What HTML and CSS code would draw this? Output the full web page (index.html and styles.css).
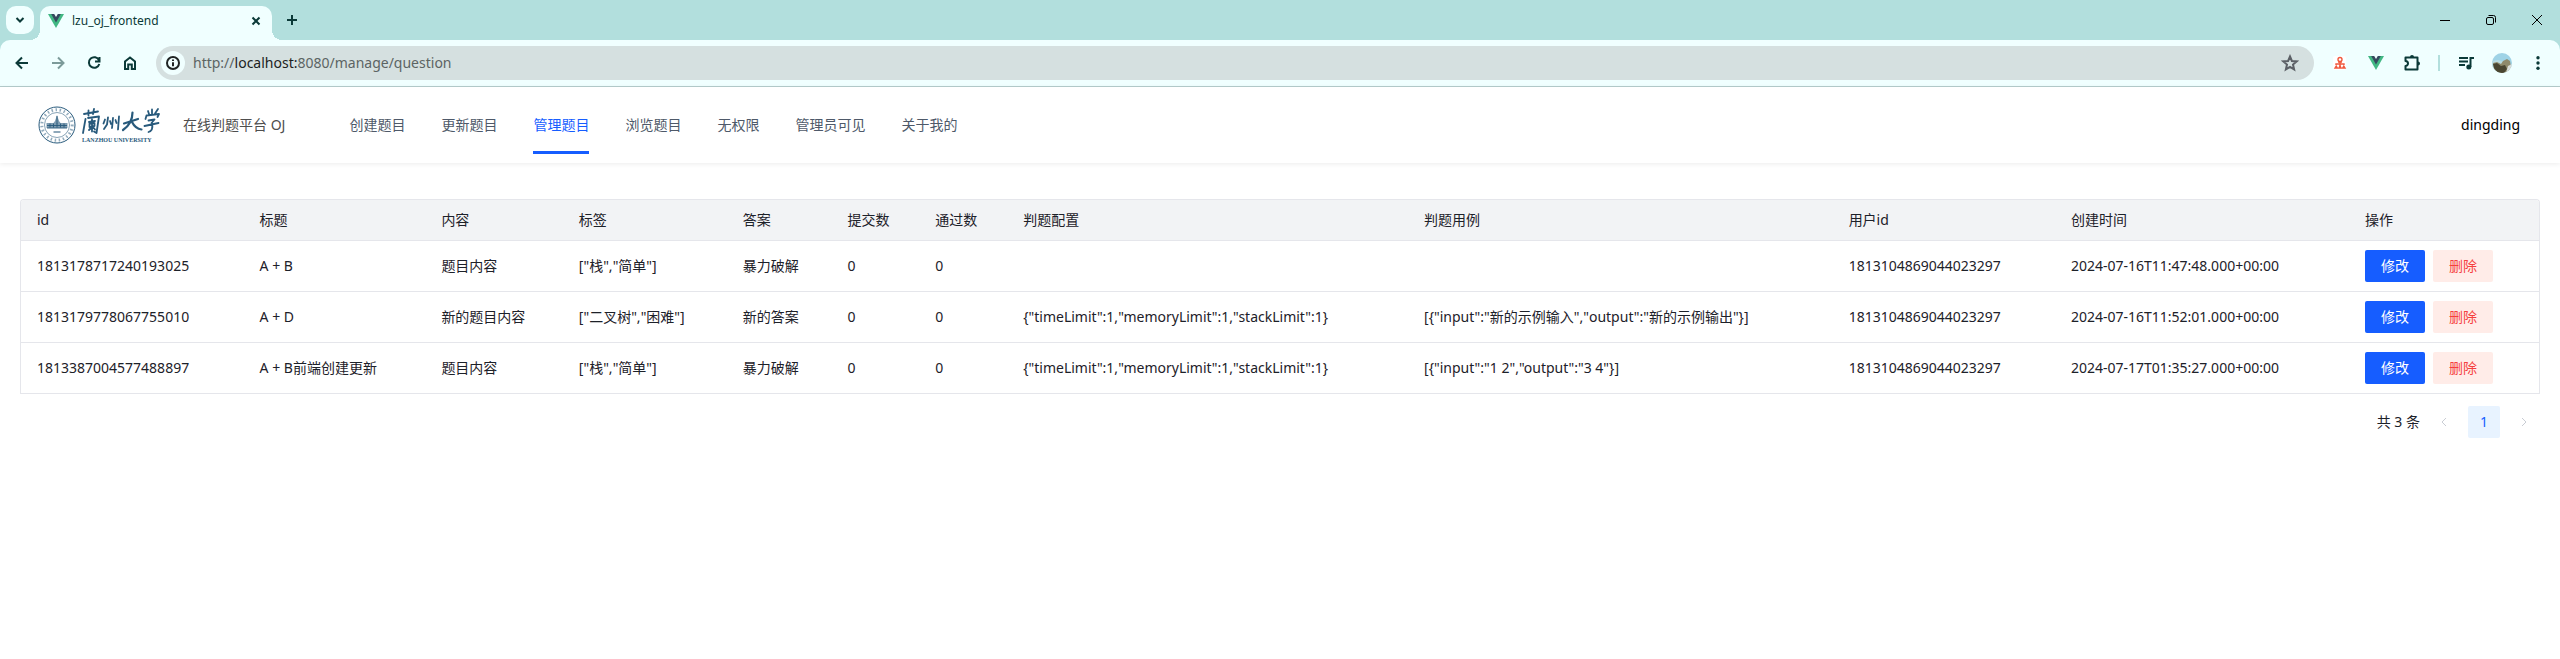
FILE: index.html
```html
<!DOCTYPE html>
<html lang="zh-CN">
<head>
<meta charset="utf-8">
<title>lzu_oj_frontend</title>
<link rel="stylesheet" href="styles.css">
</head>
<body>
<div class="browser">
  <div class="tabstrip">
    <button class="tab-search" aria-label="Search tabs"><svg width="28" height="28" viewBox="0 0 28 28"><path d="M10.500 12L14 15.500L17.500 12" class="ln2"/></svg></button>
    <div class="tab">
      <svg class="vue" width="16" height="16" viewBox="0 0 16 16"><path d="M0 1h16L8 15z" fill="#41b883"/><path d="M3.200 1h9.600L8 9.500z" fill="#35495e"/><path d="M6.200 1h3.600L8 4z" fill="#f0ffff"/></svg>
      <span class="tab-title">lzu_oj_frontend</span>
      <button class="tab-close" aria-label="Close tab"><svg width="16" height="16" viewBox="0 0 16 16"><path d="M4.500 4.500l7 7M11.500 4.500l-7 7" class="ln2"/></svg></button>
    </div>
    <button class="new-tab" aria-label="New tab"><svg width="16" height="16" viewBox="0 0 16 16"><path d="M8 3v10M3 8h10" class="ln2"/></svg></button>
    <div class="window-controls">
      <button aria-label="Minimize"><svg width="12" height="12" viewBox="0 0 12 12"><path d="M1 6.500h10" class="ln1"/></svg></button>
      <button aria-label="Restore"><svg width="12" height="12" viewBox="0 0 12 12"><rect x="1.500" y="3.500" width="7" height="7" rx="1.500" class="ln1"/><path d="M3.500 1.500H8.500a2 2 0 0 1 2 2V8.500" class="ln1"/></svg></button>
      <button aria-label="Close"><svg width="12" height="12" viewBox="0 0 12 12"><path d="M1 1l10 10M11 1L1 11" class="ln1"/></svg></button>
    </div>
  </div>
  <div class="toolbar">
    <div class="nav-buttons">
      <button aria-label="Back"><svg width="16" height="16" viewBox="0 0 16 16"><path d="M14 8H3M8 2.500L2.500 8L8 13.500" class="ln2"/></svg></button>
      <button class="off" aria-label="Forward"><svg width="16" height="16" viewBox="0 0 16 16"><path d="M2 8h11M8 2.500L13.500 8L8 13.500" class="ln2"/></svg></button>
      <button aria-label="Reload"><svg width="16" height="16" viewBox="0 0 16 16"><path d="M13 5.200A5.300 5.300 0 1 0 13.300 9M13.500 2v4.500H9" class="ln2"/></svg></button>
      <button aria-label="Home"><svg width="16" height="16" viewBox="0 0 16 16"><path d="M3 14V6.500L8 2.500L13 6.500V14H9.800V9.500H6.200V14z" class="ln2"/></svg></button>
    </div>
    <div class="omnibox">
      <button class="info" aria-label="Site information"><svg width="16" height="16" viewBox="0 0 16 16"><circle cx="8" cy="8" r="6" class="ln2"/><path d="M8 7.300V11.300M8 4.500v1.600" class="ln2"/></svg></button>
      <div class="url">http://<b>localhost:</b>8080/manage/question</div>
      <button class="star" aria-label="Bookmark"><svg width="18" height="18" viewBox="0 0 18 18"><path d="M9 2.500l1.900 4.500 4.800.4-3.700 3.200 1.100 4.700L9 12.800l-4.100 2.500L6 10.600 2.300 7.400 7.100 7z" class="ln2"/></svg></button>
    </div>
    <div class="extensions">
      <button aria-label="Extension"><svg width="16" height="16" viewBox="0 0 16 16"><rect x="1" y="1" width="13" height="14" rx="2" fill="#fff"/><g fill="none" stroke="#f0593e" stroke-width="1.400"><circle cx="8" cy="4.500" r="2"/><path d="M8 6v7M4 10V9h8v1M6 7h4"/><path d="M3 13l1.200-2 1.200 2zM10.600 13l1.200-2 1.200 2zM6.800 13L8 11l1.200 2z"/></g></svg></button>
      <button aria-label="Vue devtools"><svg width="16" height="16" viewBox="0 0 16 16"><path d="M0 1h16L8 15z" fill="#41b883"/><path d="M3.200 1h9.600L8 9.500z" fill="#35495e"/><path d="M6.200 1h3.600L8 4z" fill="#f0ffff"/></svg></button>
      <button aria-label="Extensions"><svg width="20" height="20" viewBox="0 0 20 20"><path d="M3.500 4.500H15.500V16.500H3.500V13a2.500 2.500 0 0 0 0-5z" class="ln2" stroke-linejoin="round"/><path d="M8 4a2 2 0 0 1 4 0zM16 8.500a2 2 0 0 1 0 4z" fill="#0b3a38"/></svg></button>
      <span class="divider"></span>
      <button aria-label="Media"><svg width="18" height="18" viewBox="0 0 18 18"><path d="M2 4h9M2 7.500h9M2 11h6M13.500 13V4H17" class="ln2"/><circle cx="11.800" cy="13" r="2.500" fill="#0b3a38"/></svg></button>
      <button aria-label="Profile"><svg width="20" height="20" viewBox="0 0 20 20"><defs><clipPath id="face"><circle cx="10" cy="10" r="10"/></clipPath></defs><g clip-path="url(#face)"><path d="M0 0h20v20H0z" fill="#9fd3e6"/><path d="M0 8l6-1 6 2v11H0z" fill="#b9dbe2"/><path d="M1 10l4-1 4 2 2-3 4-2 3 2 1 6-4 7H6l-4-5z" fill="#8f8a6c"/><path d="M1 11l4-1 4 3 4-1 2 4-3 4H6l-4-5z" fill="#4a4632"/><path d="M16 13l4-2v9h-6z" fill="#d9dedb"/></g></svg></button>
      <button aria-label="Menu"><svg width="16" height="16" viewBox="0 0 16 16"><g fill="#0b3a38"><circle cx="8" cy="2.800" r="1.700"/><circle cx="8" cy="8" r="1.700"/><circle cx="8" cy="13.200" r="1.700"/></g></svg></button>
    </div>
  </div>
</div>
<header class="header">
  <a class="brand" href="#">
    <svg class="logo" width="124" height="40" viewBox="0 0 124 40" fill="none" stroke="#285a7c" role="img" aria-label="兰州大学">
      <circle cx="20" cy="20" r="18" stroke-width="1"/>
      <circle cx="20" cy="20" r="15.200" stroke-width="3" stroke-dasharray="1.500 2.600" opacity=".5"/>
      <circle cx="20" cy="20" r="12.500" stroke-width=".700" opacity=".8"/>
      <path d="M9.500 23v-5h7l1.500-2 2-6 2 6 1.500 2h7v5z" fill="#7d9bb0" stroke="none"/>
      <path d="M10 20.500h20M10 23h20M20 11v8M13 18.500v4M16.500 18.500v4M20 18.500v4M23.500 18.500v4M27 18.500v4" stroke-width=".900"/>
      <path d="M16.500 27h7" stroke-width="1.500" opacity=".7"/>
      <g stroke-width="1.800" stroke-linecap="round" stroke-linejoin="round">
        <path d="M47 9l14-2.500M51.500 5.500l0 5M57 4l-1 5M48.500 14l-2.500 14M51 13l11-1.500-2.500 16.500-2.500-1.500M52 17l6-1M55 14.500v12M52.500 18.500v3.500l5-1v-3zM55 22l-3 3M56 22l2 2.500"/>
        <path d="M68 14.500l-1.500 4M71 12.500l-1 7-3 4.500M73 16l1 3M76 13l-1 10M78.500 15l1 3M82 11.500l-1 13"/>
        <path d="M87 18.500l14-4.500M95.500 7.500c0 7-3 13-9.500 17.500M95 17c2 4 5 7 9.500 7.500" stroke-width="2.200"/>
        <path d="M111 6l1 3M115 4.500v4M121 4l-3 4.500M108.500 14l1-3.500 12.500-1.500-1.500 3M111.500 15.500l6-1-3 3.500M107.500 21l14-3M115 18c1 5 .500 8-3.500 9"/>
      </g>
      <text x="45" y="37" class="logo-text">LANZHOU UNIVERSITY</text>
    </svg>
    <span>在线判题平台 OJ</span>
  </a>
  <nav class="menu">
    <a href="#">创建题目</a>
    <a href="#">更新题目</a>
    <a href="#" class="active">管理题目</a>
    <a href="#">浏览题目</a>
    <a href="#">无权限</a>
    <a href="#">管理员可见</a>
    <a href="#">关于我的</a>
  </nav>
  <div class="user">dingding</div>
</header>
<main class="content">
  <table class="grid">
    <colgroup><col class="c-id"><col class="c-title"><col class="c-content"><col class="c-tags"><col class="c-answer"><col class="c-num"><col class="c-num"><col class="c-config"><col class="c-case"><col class="c-user"><col class="c-time"><col></colgroup>
    <thead><tr><th>id</th><th>标题</th><th>内容</th><th>标签</th><th>答案</th><th>提交数</th><th>通过数</th><th>判题配置</th><th>判题用例</th><th>用户id</th><th>创建时间</th><th>操作</th></tr></thead>
    <tbody>
      <tr><td>1813178717240193025</td><td>A + B</td><td>题目内容</td><td>["栈","简单"]</td><td>暴力破解</td><td>0</td><td>0</td><td></td><td></td><td>1813104869044023297</td><td>2024-07-16T11:47:48.000+00:00</td><td><div class="actions"><button class="btn primary">修改</button><button class="btn danger">删除</button></div></td></tr>
      <tr><td>1813179778067755010</td><td>A + D</td><td>新的题目内容</td><td>["二叉树","困难"]</td><td>新的答案</td><td>0</td><td>0</td><td>{"timeLimit":1,"memoryLimit":1,"stackLimit":1}</td><td>[{"input":"新的示例输入","output":"新的示例输出"}]</td><td>1813104869044023297</td><td>2024-07-16T11:52:01.000+00:00</td><td><div class="actions"><button class="btn primary">修改</button><button class="btn danger">删除</button></div></td></tr>
      <tr><td>1813387004577488897</td><td>A + B前端创建更新</td><td>题目内容</td><td>["栈","简单"]</td><td>暴力破解</td><td>0</td><td>0</td><td>{"timeLimit":1,"memoryLimit":1,"stackLimit":1}</td><td>[{"input":"1 2","output":"3 4"}]</td><td>1813104869044023297</td><td>2024-07-17T01:35:27.000+00:00</td><td><div class="actions"><button class="btn primary">修改</button><button class="btn danger">删除</button></div></td></tr>
    </tbody>
  </table>
  <div class="pager">
    <span class="total">共 3 条</span>
    <button class="page" aria-label="Previous page"><svg width="12" height="12" viewBox="0 0 12 12"><path d="M8 2L4 6l4 4"/></svg></button>
    <button class="page current">1</button>
    <button class="page" aria-label="Next page"><svg width="12" height="12" viewBox="0 0 12 12"><path d="M4 2l4 4-4 4"/></svg></button>
  </div>
</main>
</body>
</html>
```
FILE: styles.css
```css
* { box-sizing: border-box; }
body { margin: 0; background: #fff; color: #1d2129; font: 14px/22px "Noto Sans", "Noto Sans CJK SC", sans-serif; }
button { font: inherit; color: inherit; border: 0; padding: 0; background: none; display: flex; align-items: center; justify-content: center; }
svg { display: block; flex: none; }
a { color: inherit; text-decoration: none; }
.ln2 { fill: none; stroke: currentColor; stroke-width: 2; }
.ln1 { fill: none; stroke: #000; stroke-width: 1; }

.browser { background: #b2dfdd; color: #0b3a38; border-bottom: 1px solid #b5cccc; }
.tabstrip { height: 40px; display: flex; align-items: center; }
.tab-search { width: 28px; height: 28px; margin-left: 6px; border-radius: 10px; background: #f0ffff; }
.tab { position: relative; align-self: flex-end; width: 232px; height: 34px; margin-left: 6px; padding: 0 8px 4px; display: flex; align-items: center; border-radius: 10px 10px 0 0; background: #f0ffff; }
.tab::before, .tab::after { content: ""; position: absolute; bottom: 0; width: 10px; height: 10px; }
.tab::before { right: 100%; background: radial-gradient(circle at 0 0, transparent 10px, #f0ffff 10px); }
.tab::after { left: 100%; background: radial-gradient(circle at 100% 0, transparent 10px, #f0ffff 10px); }
.tab-title { flex: 1; margin-left: 8px; font-size: 12px; line-height: 16px; }
.new-tab { margin-left: 12px; }
.window-controls { margin-left: auto; margin-right: 17px; display: flex; gap: 34px; }
.toolbar { height: 46px; display: flex; align-items: center; background: #f0ffff; border-radius: 10px 10px 0 0; }
.nav-buttons { display: flex; gap: 20px; margin-left: 14px; margin-right: 18px; }
.off { opacity: .5; }
.omnibox { flex: 1; height: 34px; padding: 0 15px 0 5px; display: flex; align-items: center; gap: 8px; border-radius: 17px; background: #d5e0e0; }
.info { width: 24px; height: 24px; border-radius: 50%; background: #f0ffff; color: #1f2424; }
.url { flex: 1; color: #5c6464; }
.url b { font-weight: 400; color: #1c2222; }
.star { color: #5c6066; }
.extensions { display: flex; align-items: center; gap: 16px; margin: 0 12px 0 16px; }
.extensions button { width: 20px; }
.divider { width: 2px; height: 16px; background: #b2dfdd; }

.header { height: 76px; padding: 0 40px 0 37px; display: flex; align-items: center; box-shadow: 0 1px 5px rgba(0, 0, 0, .08); }
.brand { display: flex; align-items: center; gap: 22px; color: #4e4e4e; margin-right: 52px; }
.logo-text { font: 700 6px "Liberation Serif", serif; fill: #285a7c; stroke: none; }
.menu { align-self: stretch; display: flex; gap: 36px; padding: 9px 12px; color: #4e5969; }
.menu a { display: flex; align-items: center; border-bottom: 3px solid transparent; border-top: 3px solid transparent; }
.menu .active { color: #165dff; border-bottom-color: #165dff; }
.user { margin-left: auto; color: #000; }

.content { padding: 36px 20px 0; }
.grid { width: 100%; table-layout: fixed; border-collapse: separate; border-spacing: 0; border: 1px solid #e5e6eb; border-bottom: 0; border-radius: 4px 4px 0 0; }
.grid th, .grid td { padding: 9px 16px; text-align: left; font-weight: 400; white-space: nowrap; border-bottom: 1px solid #e5e6eb; }
.grid th { background: #f2f3f5; height: 41px; }
.grid th:first-child { border-top-left-radius: 3px; }
.grid th:last-child { border-top-right-radius: 3px; }
.c-id { width: 8.84%; }
.c-title { width: 7.22%; }
.c-content { width: 5.46%; }
.c-tags { width: 6.51%; }
.c-answer { width: 4.16%; }
.c-num { width: 3.49%; }
.c-config { width: 15.92%; }
.c-case { width: 16.86%; }
.c-user { width: 8.83%; }
.c-time { width: 11.68%; }
.actions { display: flex; gap: 8px; }
.btn { width: 60px; height: 32px; border-radius: 2px; }
.primary { background: #165dff; color: #fff; }
.danger { background: #ffece8; color: #f53f3f; }
.pager { margin-top: 12px; display: flex; justify-content: flex-end; align-items: center; gap: 8px; }
.page { width: 32px; height: 32px; border-radius: 2px; color: #c9cdd4; }
.page path { fill: none; stroke: currentColor; stroke-width: 1; }
.current { background: #e8f3ff; color: #165dff; }
```
